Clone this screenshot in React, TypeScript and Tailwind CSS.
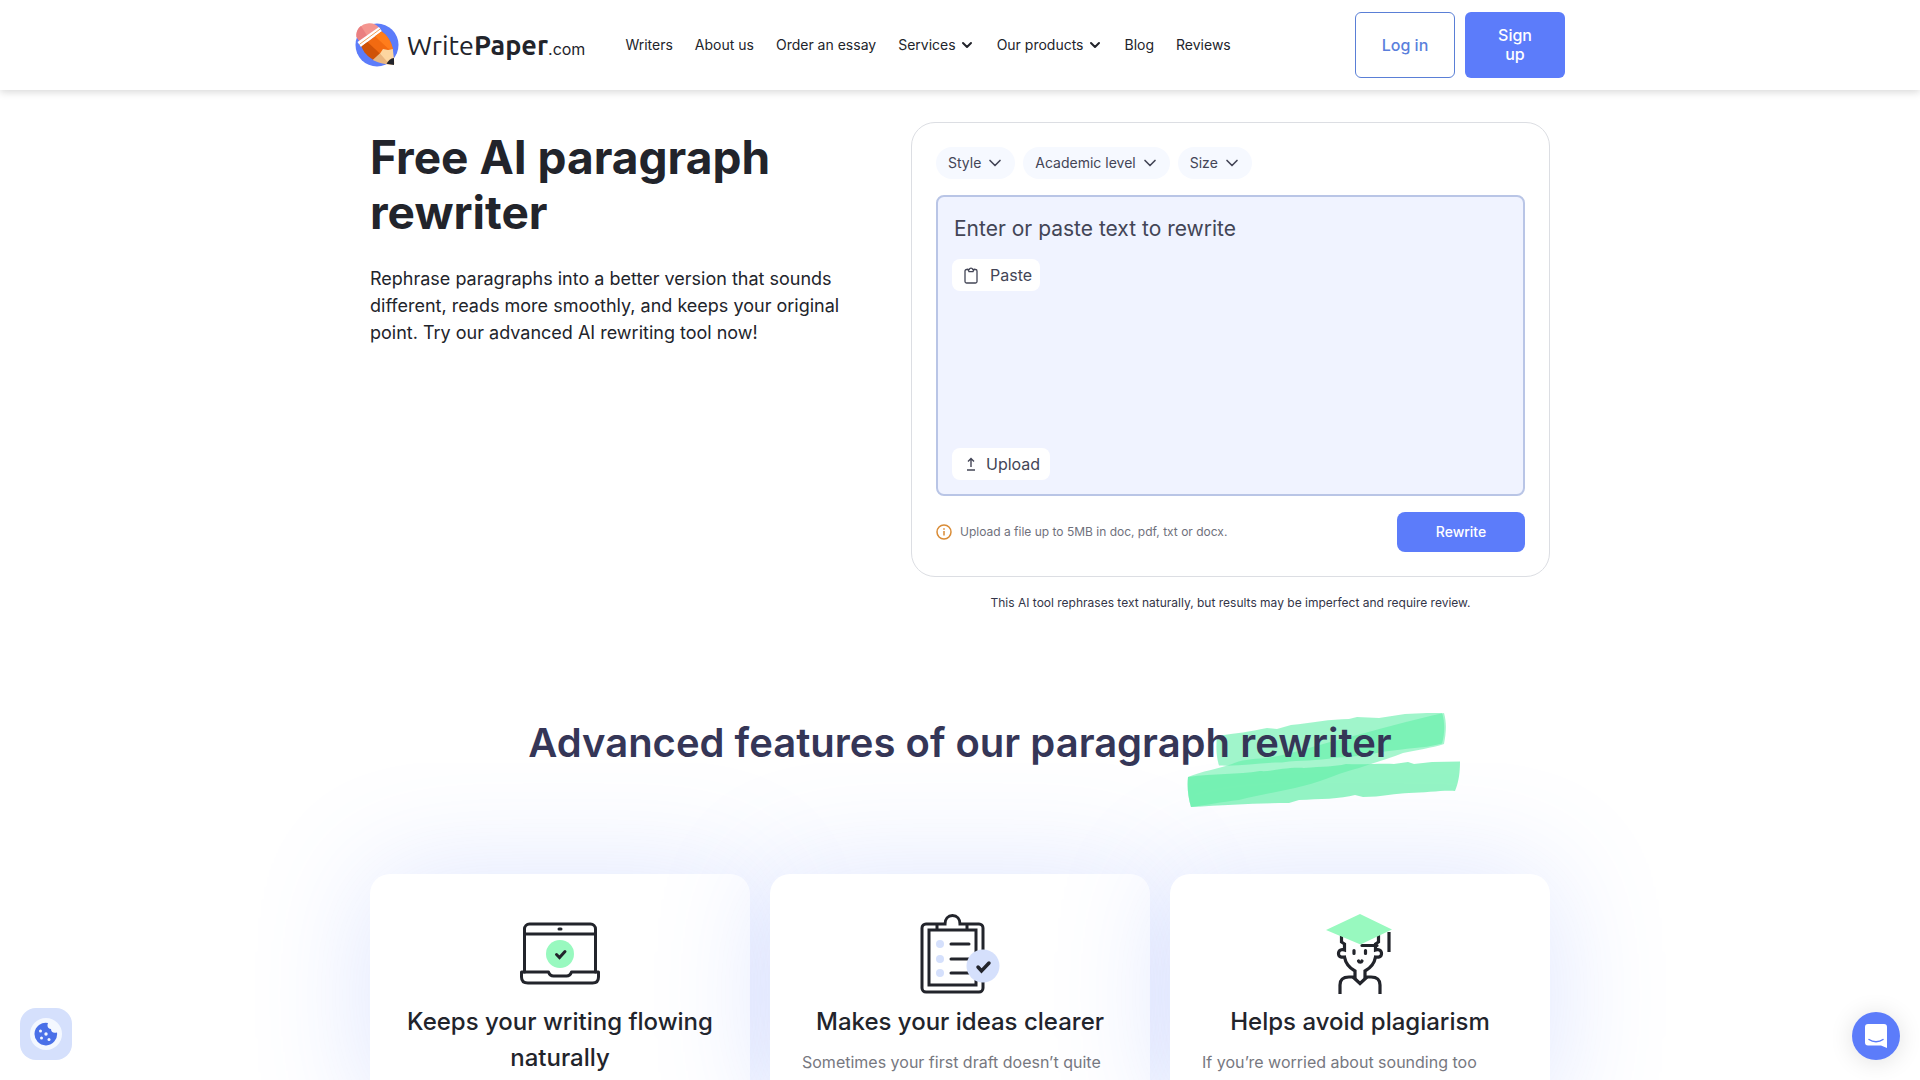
import type { ReactNode } from 'react';
import { ChevronDown } from 'lucide-react';

const navLinks = [
  { label: 'Writers' },
  { label: 'About us' },
  { label: 'Order an essay' },
  { label: 'Services', menu: true },
  { label: 'Our products', menu: true },
  { label: 'Blog' },
  { label: 'Reviews' },
];

const filters = ['Style', 'Academic level', 'Size'];

function Logo() {
  return (
    <a href="#" className="flex items-center gap-2 text-[#22242b]">
      <svg width="44" height="44" viewBox="0 0 44 44" aria-hidden="true">
        <circle cx="22" cy="22" r="21.500" fill="#5c7cfa" />
        <path d="M1.500 14C.500 7 6 .500 14 .200c4-.200 7 1 10 4.300L6 20z" fill="#f4958f" />
        <path d="M1.500 14C.800 9 3 5 6 3l7 11-7 6z" fill="#ea7f80" />
        <path d="M24 4l3 4.500L6 24l-3.500-5z" fill="#fff" />
        <path d="M25.500 5.800L4.300 21.500" stroke="#e9862f" strokeWidth=".8" />
        <path d="M26.500 8.500C32 12 36 18 38 26.500L18.500 36.500 6.500 23.500z" fill="#f26a11" />
        <path d="M6.500 23.500l6-4.500 14 13-8 5C12 33 8.500 29 6.500 23.500z" fill="#cf5208" />
        <path d="M26.500 8.500C32 12 36 18 38 26.500l-5-1L20 13.300z" fill="#ff7d1c" />
        <path d="M18 37l7-6.500 3-4.500 5 1 4.800-1 1.700 15z" fill="#fdd6a0" />
        <path d="M18 37l7-6.500 8 9 6.500 2.500C31 41.500 23 40 18 37z" fill="#e9b57f" />
        <path d="M39 35v7l-7.500-1.200c2-3.500 4-5.300 7.500-5.800z" fill="#22242b" />
      </svg>
      <span className="font-['Ubuntu','Noto_Sans',sans-serif] text-[27px] leading-8">
        Write<b className="font-semibold">Paper</b>
        <span className="font-['Inter',sans-serif] text-base">.com</span>
      </span>
    </a>
  );
}

function Header() {
  return (
    <header className="relative z-10 bg-white shadow-[0_2px_8px_rgba(0,0,0,0.16)]">
      <div className="mx-auto flex h-[90px] max-w-[1210px] items-center">
        <Logo />
        <nav className="ml-10 flex items-center gap-[22px] text-sm">
          {navLinks.map((link) => (
            <a key={link.label} href="#" className="flex items-center gap-[3px] whitespace-nowrap">
              {link.label}
              {link.menu && <ChevronDown size={16} strokeWidth={3} />}
            </a>
          ))}
        </nav>
        <div className="ml-auto flex h-[66px] gap-2.5 text-base font-medium leading-[19px]">
          <button className="w-[100px] rounded-md border border-[#5a7fd6] text-[#5a7fdc]">Log in</button>
          <button className="w-[100px] rounded-md bg-[#5c7cfa] px-6 text-white">Sign up</button>
        </div>
      </div>
    </header>
  );
}

function RewriteForm() {
  return (
    <div className="w-[639px]">
      <form className="rounded-3xl border border-[#dcdee3] bg-white p-6" onSubmit={(e) => e.preventDefault()}>
        <div className="flex gap-2">
          {filters.map((name) => (
            <button key={name} type="button" className="flex h-8 items-center gap-1 rounded-2xl bg-[#f6f9ff] pl-3 pr-2.5 text-sm text-[#434556]">
              {name}
              <ChevronDown size={20} strokeWidth={2} />
            </button>
          ))}
        </div>
        <div className="mt-4 flex h-[301px] flex-col items-start rounded-lg border-2 border-[#b9c5e6] bg-[#f0f3ff] px-3.5 pb-3.5 pt-4 text-[#434556]">
          <textarea
            aria-label="Text to rewrite"
            placeholder="Enter or paste text to rewrite"
            className="h-8 w-full resize-none overflow-hidden bg-transparent px-0.5 text-[21px] leading-8 outline-none placeholder:text-[#434556]"
          />
          <button type="button" className="mt-3.5 flex h-8 items-center gap-2.5 rounded-lg bg-white pl-2.5 pr-2 text-base">
            <svg width="18" height="18" viewBox="0 0 18 18" fill="none" stroke="currentColor" strokeWidth="1.300" aria-hidden="true">
              <path d="M6 3.500H4.500A1.500 1.500 0 0 0 3 5v10.500A1.500 1.500 0 0 0 4.500 17h9a1.500 1.500 0 0 0 1.500-1.500V5a1.500 1.500 0 0 0-1.500-1.500H12" />
              <path d="M6 3.500h1.200a1.900 1.900 0 0 1 3.600 0H12L11 5.700H7z" />
            </svg>
            Paste
          </button>
          <button type="button" className="mt-auto flex h-8 items-center gap-1.5 rounded-lg bg-white px-2.5 text-base">
            <svg width="18" height="18" viewBox="0 0 18 18" fill="none" stroke="currentColor" strokeWidth="1.400" aria-hidden="true">
              <path d="M9 12V3.500M6 6.500l3-3 3 3M5 15h8" />
            </svg>
            Upload
          </button>
        </div>
        <div className="mt-4 flex items-center justify-between">
          <p className="flex items-center gap-2 text-xs text-[#6f717c]">
            <svg width="16" height="16" viewBox="0 0 16 16" fill="none" stroke="#d98b35" strokeWidth="1.500" aria-hidden="true">
              <circle cx="8" cy="8" r="7" />
              <path d="M8 7v4.500M8 4.200v1.600" />
            </svg>
            Upload a file up to 5MB in doc, pdf, txt or docx.
          </p>
          <button type="submit" className="h-10 w-32 rounded-lg bg-[#5c7cfa] text-sm font-medium text-white">
            Rewrite
          </button>
        </div>
      </form>
      <p className="mt-4 text-center text-xs leading-5 text-[#333548]">
        This AI tool rephrases text naturally, but results may be imperfect and require review.
      </p>
    </div>
  );
}

// highlighter scribble behind the last word of the heading
function Marker() {
  return (
    <svg className="absolute -right-[68px] top-0" width="274" height="96" viewBox="0 0 274 96" aria-hidden="true">
      <path d="M31 23c20-3 32-4 50-8l10 1 14-4c20-2 40-6 58-6l8-2 22 1 26-4 22-1 15-.500c3 10 3 20 0 31-14 4-26 4-40 6-24 2-42 8-66 8-20 4-34 2-54 5-22 0-40 4-63 3-3-9-3-20-2-29.500z" fill="#5ceea6" fillOpacity=".58" />
      <path d="M258 0c3 10 2 21 0 31-12 4-28 6-41 9-12 5-30 10-44 15-18 4-32 12-56 18-20 5-44 9-64 14-18 2-32 5-48 7C2 84 1 74 2 64c14-6 30-8 44-13 8-4 20-5 34-6 28-4 44-11 72-18 36-9 72-20 106-27z" fill="#5ceea6" fillOpacity=".55" />
      <path d="M2 64c26-4 50-2 72-6 12 1 24-4 44-3 20-2 30-1 42-4 20 1 34-1 48 0l14-2 6 2 18-2 28-.500c0 10-1 20-5 29.500-12-1-30 2-46 2-12 0-28 4-46 4l-8-2c-14 4-36 4-56 5l-10 3c-30 0-62 2-98 4C2 84 1 74 2 64z" fill="#5ceea6" fillOpacity=".66" />
    </svg>
  );
}

function LaptopIcon() {
  return (
    <svg width="80" height="80" viewBox="0 0 80 80" fill="none" stroke="#22242b" strokeWidth="3" strokeLinejoin="round" aria-hidden="true">
      <path d="M4.500 58V15a5 5 0 0 1 5-5h61a5 5 0 0 1 5 5v43M4.500 20h71M39 15h2" strokeLinecap="round" />
      <path d="M1.500 58h27c1 3 2 4 5 4h13c3 0 4-1 5-4h27v5c0 4-2 6-6 6H8c-4 0-6.500-2-6.500-6z" />
      <circle cx="40" cy="40" r="14" fill="#98f9bf" stroke="none" />
      <path d="M36.500 40.500l3 3 5.500-6" strokeLinecap="round" strokeLinejoin="miter" />
    </svg>
  );
}

function ClipboardIcon() {
  return (
    <svg width="80" height="80" viewBox="0 0 80 80" fill="none" stroke="#22242b" strokeWidth="3" aria-hidden="true">
      <path d="M25 10H6a4 4 0 0 0-4 4v60a4 4 0 0 0 4 4h53a4 4 0 0 0 4-4V14a4 4 0 0 0-4-4H40c0-5-3-8.500-7.500-8.500S25 5 25 10z" />
      <path d="M9 16h47v55H9zM17 10v6M47 10v6" />
      <path d="M31 30h18M31 45h18M31 59h18" strokeLinecap="round" />
      <g fill="#d5e0fc" stroke="none">
        <circle cx="20" cy="30" r="4" />
        <circle cx="20" cy="45" r="4" />
        <circle cx="20" cy="59" r="4" />
        <circle cx="63" cy="52" r="16.500" />
      </g>
      <path d="M58 53l3.500 4 7.500-8" strokeLinecap="round" strokeWidth="3.500" />
    </svg>
  );
}

function GraduateIcon() {
  return (
    <svg width="80" height="80" viewBox="0 0 80 80" fill="none" stroke="#22242b" strokeWidth="3.200" aria-hidden="true">
      <path d="M21.500 20v8l3 2v6c-3-1-6 0-6 3.500s3 4 6 3.500c1 6 5 11 10.500 14v6h-6c-6 0-9 3-9 8v9" />
      <path d="M58.500 20v8l-3 2v6c3-1 6 0 6 3.500s-3 4-6 3.500c-1 6-5 11-10.500 14v6h6c6 0 9 3 9 8v9" />
      <path d="M33 63l7 6.500 7-6.500" />
      <path d="M42 31.500h15M34 36.500v3M45.500 36.500v3M38.500 47c.500 1.500 3 1.500 3.500 0" strokeLinecap="round" />
      <path d="M40 0l32 15.500L40.500 30.500 6 16z" fill="#98f9bf" stroke="none" />
      <path d="M69 18v20" />
    </svg>
  );
}

interface FeatureCardProps {
  icon: ReactNode;
  title: string;
  text?: string;
}

function FeatureCard({ icon, title, text }: FeatureCardProps) {
  return (
    <article className="flex-1 rounded-[20px] bg-white px-8 pb-10 pt-10 shadow-[0_0_120px_rgba(92,124,250,0.2)]">
      <div className="flex justify-center">{icon}</div>
      <h3 className="mt-2.5 text-center text-2xl font-medium leading-9 text-[#22242b]">{title}</h3>
      {text && <p className="mt-2.5 text-base leading-6 text-[#77787f]">{text}</p>}
    </article>
  );
}

export default function App() {
  return (
    <div className="relative min-h-screen overflow-hidden bg-white font-['Inter',sans-serif] text-[#22242b]">
      <Header />
      <main>
        <section className="mx-auto flex max-w-[1180px] items-start justify-between pt-8">
          <div className="w-[500px] pt-2">
            <h1 className="text-[46px] font-bold leading-[55px]">Free AI paragraph rewriter</h1>
            <p className="mt-[25px] text-lg leading-[27px]">
              Rephrase paragraphs into a better version that sounds different, reads more smoothly, and keeps your original point. Try our advanced AI rewriting tool now!
            </p>
          </div>
          <RewriteForm />
        </section>

        <section className="mx-auto mt-[100px] max-w-[1180px]">
          <div className="flex justify-center">
            <div className="relative z-10">
              <Marker />
              <h2 className="relative text-[40px] font-semibold leading-[60px] text-[#353657]">
                Advanced features of our paragraph rewriter
              </h2>
            </div>
          </div>
          <div className="mt-[101px] flex gap-5">
            <FeatureCard icon={<LaptopIcon />} title="Keeps your writing flowing naturally" />
            <FeatureCard icon={<ClipboardIcon />} title="Makes your ideas clearer" text="Sometimes your first draft doesn’t quite" />
            <FeatureCard icon={<GraduateIcon />} title="Helps avoid plagiarism" text="If you’re worried about sounding too" />
          </div>
        </section>
      </main>

      <button aria-label="Cookie settings" className="fixed bottom-5 left-5 z-20 flex size-[52px] items-center justify-center rounded-2xl bg-[#d5e0fc]">
        <span className="flex size-8 items-center justify-center rounded-full bg-[#f4f8ff]">
          <svg width="24" height="24" viewBox="0 0 24 24" aria-hidden="true">
            <path d="M14 1c-1.500 4 .500 6 3 6 0 3 2 4.500 6 3.500A11.300 11.300 0 1 1 14 1z" fill="#4a70e8" />
            <g fill="#f4f8ff">
              <circle cx="6.500" cy="9" r="1.500" />
              <circle cx="12" cy="12" r="1.700" />
              <circle cx="7.500" cy="16" r="1.500" />
              <circle cx="15" cy="17.500" r="1.500" />
            </g>
          </svg>
        </span>
      </button>
      <button aria-label="Open chat" className="fixed bottom-5 right-5 z-20 flex size-12 items-center justify-center rounded-full bg-[#5c7cfa] shadow-[0_2px_24px_rgba(0,0,0,0.12)]">
        <svg width="22" height="24" viewBox="0 0 22 24" aria-hidden="true">
          <path d="M3 0h16a3 3 0 0 1 3 3v21l-6-2.500H3a3 3 0 0 1-3-3V3a3 3 0 0 1 3-3z" fill="#fff" />
          <path d="M4 15.500c4 3 10 3 14 0" fill="none" stroke="#5c7cfa" strokeWidth="1.500" strokeLinecap="round" />
        </svg>
      </button>
    </div>
  );
}
